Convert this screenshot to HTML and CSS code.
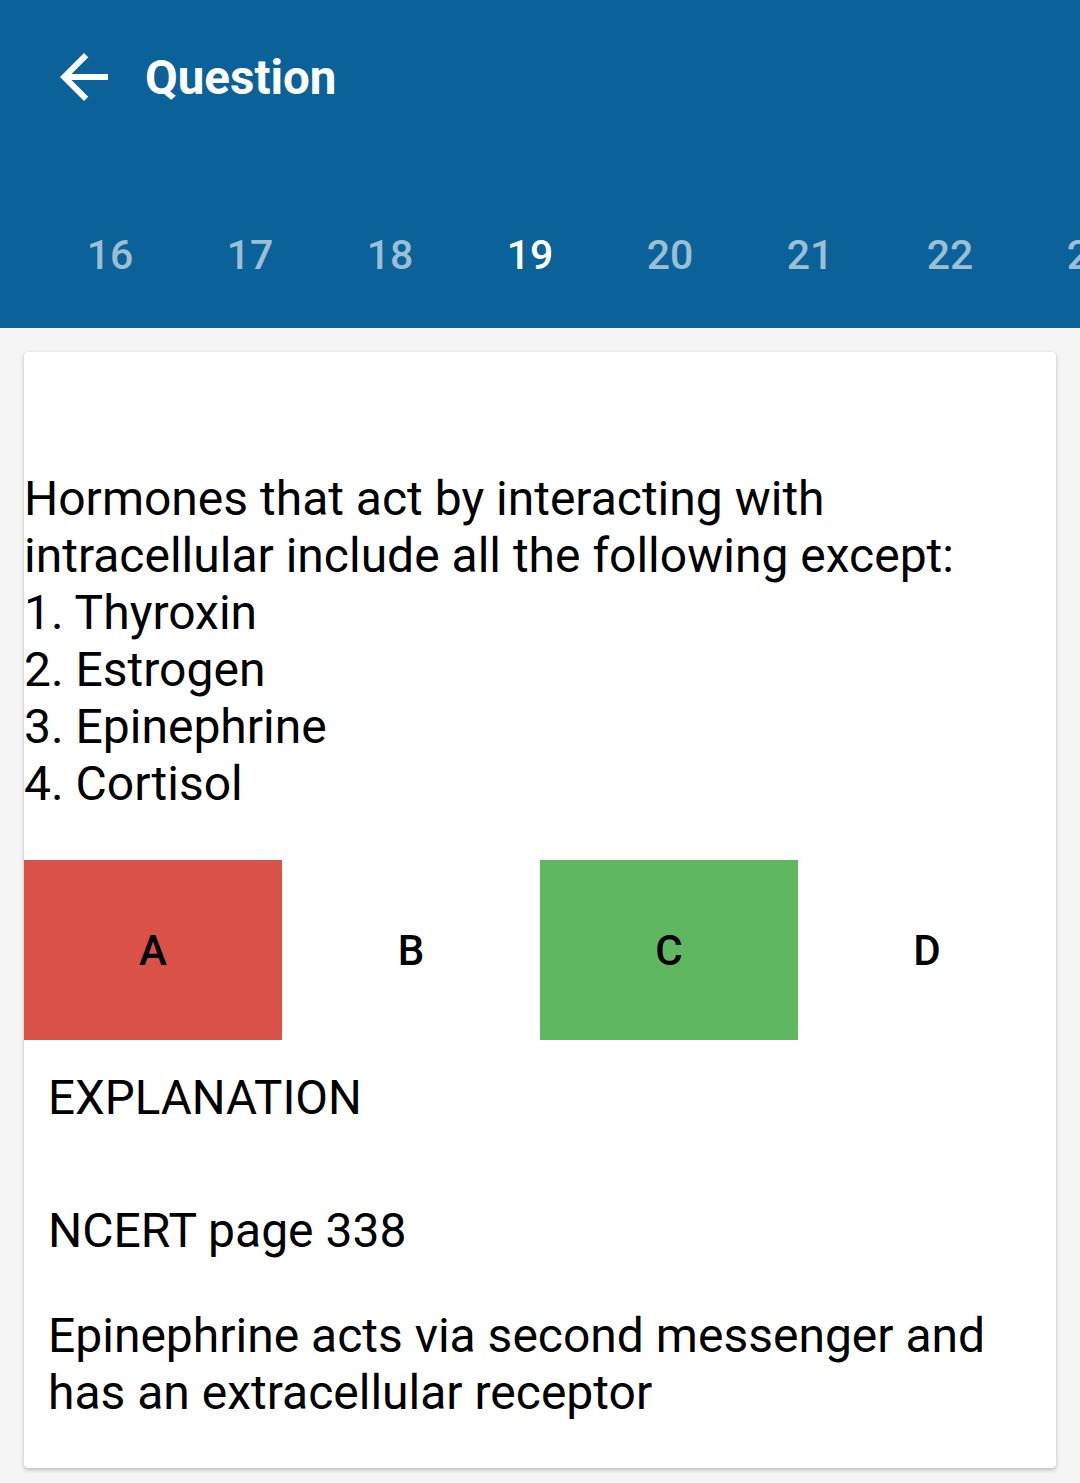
FILE: index.html
```html
<!DOCTYPE html>
<html>
<head>
<meta charset="utf-8">
<link rel="stylesheet" href="styles.css">
</head>
<body>
<header class="appbar">
  <div class="toolbar">
    <svg class="back" viewBox="0 0 24 24" width="72" height="72"><path d="M20 11H7.83l5.59-5.59L12 4l-8 8 8 8 1.41-1.41L7.83 13H20v-2z" fill="#fff"/></svg>
    <h1 class="title">Question</h1>
  </div>
  <nav class="tabs">
    <span class="tab">16</span>
    <span class="tab">17</span>
    <span class="tab">18</span>
    <span class="tab active">19</span>
    <span class="tab">20</span>
    <span class="tab">21</span>
    <span class="tab">22</span>
    <span class="tab">23</span>
  </nav>
</header>
<main class="content">
  <section class="card">
    <p class="question">Hormones that act by interacting with intracellular include all the following except:<br>1. Thyroxin<br>2. Estrogen<br>3. Epinephrine<br>4. Cortisol</p>
    <div class="options">
      <div class="opt wrong">A</div>
      <div class="opt">B</div>
      <div class="opt right">C</div>
      <div class="opt">D</div>
    </div>
    <div class="explain">
      <p class="exp-title">EXPLANATION</p>
      <p class="exp-ref">NCERT page 338</p>
      <p class="exp-body">Epinephrine acts via second messenger and has an extracellular receptor</p>
    </div>
  </section>
</main>
</body>
</html>
```

FILE: styles.css
```css
* { box-sizing: border-box; }
html, body { margin: 0; padding: 0; }
body {
  width: 1080px;
  height: 1483px;
  overflow: hidden;
  background: #f5f5f5;
  font-family: Roboto, "Liberation Sans", sans-serif;
  color: #000;
}
.appbar {
  background: #0b6299;
  height: 328px;
  display: flex;
  flex-direction: column;
}
.toolbar {
  display: flex;
  align-items: center;
  height: 156px;
  padding-left: 48px;
}
.back { flex: none; margin-top: -2px; }
.title {
  margin: 0 0 0 25px;
  color: #fff;
  font-size: 47.5px;
  font-weight: 700;
}
.tabs {
  display: flex;
  padding-left: 40px;
  overflow: hidden;
  white-space: nowrap;
  margin-top: 75px;
}
.tab {
  flex: none;
  width: 140px;
  text-align: center;
  font-size: 41px;
  font-weight: 500;
  color: rgba(255,255,255,0.6);
  line-height: 48px;
}
.tab.active { color: #fff; }
.content {
  padding: 24px 24px 0;
}
.card {
  background: #fff;
  border-radius: 4px;
  box-shadow: 0 2px 4px rgba(0,0,0,0.22), 0 0 1px rgba(0,0,0,0.12);
  height: 1116px;
  padding-top: 118px;
}
.question {
  margin: 0;
  font-size: 48px;
  line-height: 57px;
}
.options {
  display: grid;
  grid-template-columns: repeat(4, 1fr);
  margin-top: 48px;
  height: 180px;
}
.opt {
  display: flex;
  align-items: center;
  justify-content: center;
  font-size: 42px;
  font-weight: 500;
}
.opt.wrong { background: #d95147; }
.opt.right { background: #5fb85f; }
.explain {
  padding: 30px 24px 0;
}
.explain p {
  margin: 0;
  font-size: 48px;
  line-height: 57px;
}
.exp-title { font-size: 47.5px !important; }
.exp-ref { margin-top: 75px !important; }
.exp-body { margin-top: 48px !important; }
```
